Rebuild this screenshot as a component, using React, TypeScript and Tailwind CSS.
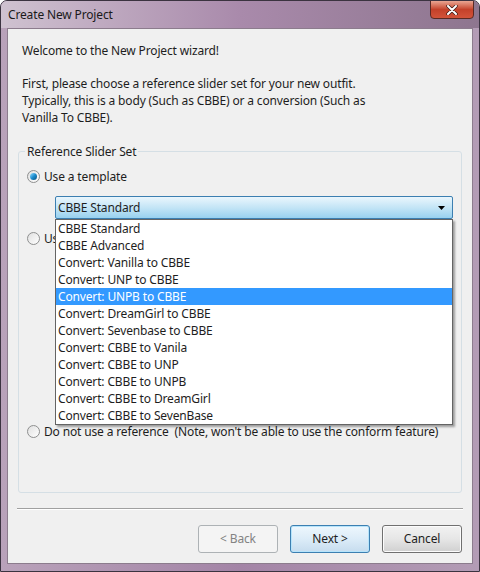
import React from "react";

const items = [
  "CBBE Standard",
  "CBBE Advanced",
  "Convert: Vanilla to CBBE",
  "Convert: UNP to CBBE",
  "Convert: UNPB to CBBE",
  "Convert: DreamGirl to CBBE",
  "Convert: Sevenbase to CBBE",
  "Convert: CBBE to Vanila",
  "Convert: CBBE to UNP",
  "Convert: CBBE to UNPB",
  "Convert: CBBE to DreamGirl",
  "Convert: CBBE to SevenBase",
];

const Radio: React.FC<{ checked?: boolean }> = ({ checked }) => (
  <span className="relative flex h-[13px] w-[13px] shrink-0 items-center justify-center rounded-full border border-[#8e8f8f] bg-gradient-to-br from-[#e0e0e0] to-[#ffffff]">
    {checked && (
      <span className="h-[7px] w-[7px] rounded-full bg-gradient-to-br from-[#8ee0ff] via-[#1b8ed0] to-[#0d4f7c]" />
    )}
  </span>
);

const Cursor = () => (
  <svg width="14" height="22" viewBox="0 0 14 22" className="absolute left-[284px] top-[298px]">
    <path d="M1 1 L1 17 L5 13 L8 20 L10.5 19 L7.5 12 L13 12 Z" fill="#fff" stroke="#000" strokeWidth="1" strokeLinejoin="round" />
  </svg>
);

const App: React.FC = () => {
  return (
    <div
      className="relative flex h-[572px] w-[480px] flex-col overflow-hidden rounded-t-[7px] border border-[#3b3340] bg-gradient-to-r from-[#b9a2ba] via-[#a384a6] to-[#b39cb5] text-[12px] tracking-[-0.15px] text-[#1e1e1e]"
      style={{ fontFamily: '"Noto Sans", "Noto Sans CJK JP", sans-serif' }}
    >
      {/* title bar */}
      <div className="relative flex h-[27px] shrink-0 items-center bg-gradient-to-r from-[#cfc2d0] via-[#a98aab] to-[#8e768f] pl-[7px]">
        <span className="text-[12px] text-[#1a1a1a]">Create New Project</span>
        <div className="absolute right-[5px] top-[-1px] flex h-[19px] w-[44px] items-center justify-center rounded-b-[4px] border border-[#5a2a24] bg-gradient-to-b from-[#e9a592] via-[#c4412a] to-[#d2533a]">
          <svg width="12" height="10" viewBox="0 0 12 10">
            <path d="M2 1 L10 9 M10 1 L2 9" stroke="#3b1b16" strokeWidth="3.4" strokeLinecap="round" />
            <path d="M2 1 L10 9 M10 1 L2 9" stroke="#fff" strokeWidth="2" strokeLinecap="round" />
          </svg>
        </div>
      </div>

      {/* client area */}
      <div className="mx-[6px] mb-[7px] flex flex-1 flex-col border border-[#8c7c8d] bg-[#f0f0f0] px-[14px] pt-[13px]">
        <p className="leading-[17px]">Welcome to the New Project wizard!</p>
        <p className="mt-[16px] leading-[17px]">
          First, please choose a reference slider set for your new outfit.
          <br />
          Typically, this is a body (Such as CBBE) or a conversion (Such as
          <br />
          Vanilla To CBBE).
        </p>

        {/* group box */}
        <fieldset className="relative mx-[-4px] mt-[17px] h-[350px] rounded-[3px] border border-[#d5dfe5] px-[7px]">
          <legend className="ml-[-1px] px-[2px] leading-[17px] text-[#1e1e1e]">Reference Slider Set</legend>

          <div className="mt-[8px] flex items-center gap-[4px] pl-[1px] leading-[17px]">
            <Radio checked />
            <span>Use a template</span>
          </div>

          <div className="relative ml-[29px] mr-[1px] mt-[11px]">
            <div className="flex h-[23px] items-center justify-between rounded-[2px] border border-[#3c7fb1] bg-gradient-to-b from-[#eaf6fd] via-[#c4e5f6] to-[#98d1ef] pl-[2px] pr-[7px]">
              <span>CBBE Standard</span>
              <svg width="7" height="4" viewBox="0 0 7 4">
                <path d="M0 0 L7 0 L3.5 4 Z" fill="#000" />
              </svg>
            </div>
            <ul className="absolute left-0 right-0 top-[23px] z-10 border border-[#646464] bg-white shadow-[2px_2px_2px_rgba(0,0,0,0.35)]">
              {items.map((it) => (
                <li
                  key={it}
                  className={
                    "h-[17px] pl-[2px] leading-[17px] " +
                    (it === "Convert: UNPB to CBBE" ? "bg-[#3399ff] text-white" : "text-[#1e1e1e]")
                  }
                >
                  {it}
                </li>
              ))}
            </ul>
          </div>

          <div className="mt-[11px] flex items-center gap-[4px] pl-[1px] leading-[17px]">
            <Radio />
            <span className="w-[14px] overflow-hidden whitespace-nowrap">Use a custom reference</span>
          </div>

          <div className="mt-[176px] flex h-[17px] items-center gap-[4px] pl-[1px] leading-[14px]">
            <Radio />
            <span>Do not use a reference&nbsp; (Note, won't be able to use the conform feature)</span>
          </div>
        </fieldset>

        <div className="mx-[-5px] mt-[15px] h-[2px] border-t border-b border-t-[#a0a0a0] border-b-white" />

        <div className="mt-[15px] mr-[-4px] flex justify-end gap-[12px]">
          <button className="h-[28px] w-[80px] rounded-[3px] border border-[#adb2b5] bg-[#f4f4f4] text-[#838383]">
            &lt; Back
          </button>
          <button className="h-[28px] w-[80px] rounded-[3px] border border-[#3c7fb1] bg-gradient-to-b from-[#eef7fd] via-[#dcecf8] to-[#c6dcee] text-[#1e1e1e] shadow-[inset_0_0_0_1px_#b6e4fb]">
            Next &gt;
          </button>
          <button className="h-[28px] w-[80px] rounded-[3px] border border-[#707070] bg-gradient-to-b from-[#f2f2f2] via-[#e6e6e6] to-[#d0d0d0] text-[#1e1e1e] shadow-[inset_0_0_0_1px_#fcfcfc]">
            Cancel
          </button>
        </div>
      </div>
      <Cursor />
    </div>
  );
};

export default App;
